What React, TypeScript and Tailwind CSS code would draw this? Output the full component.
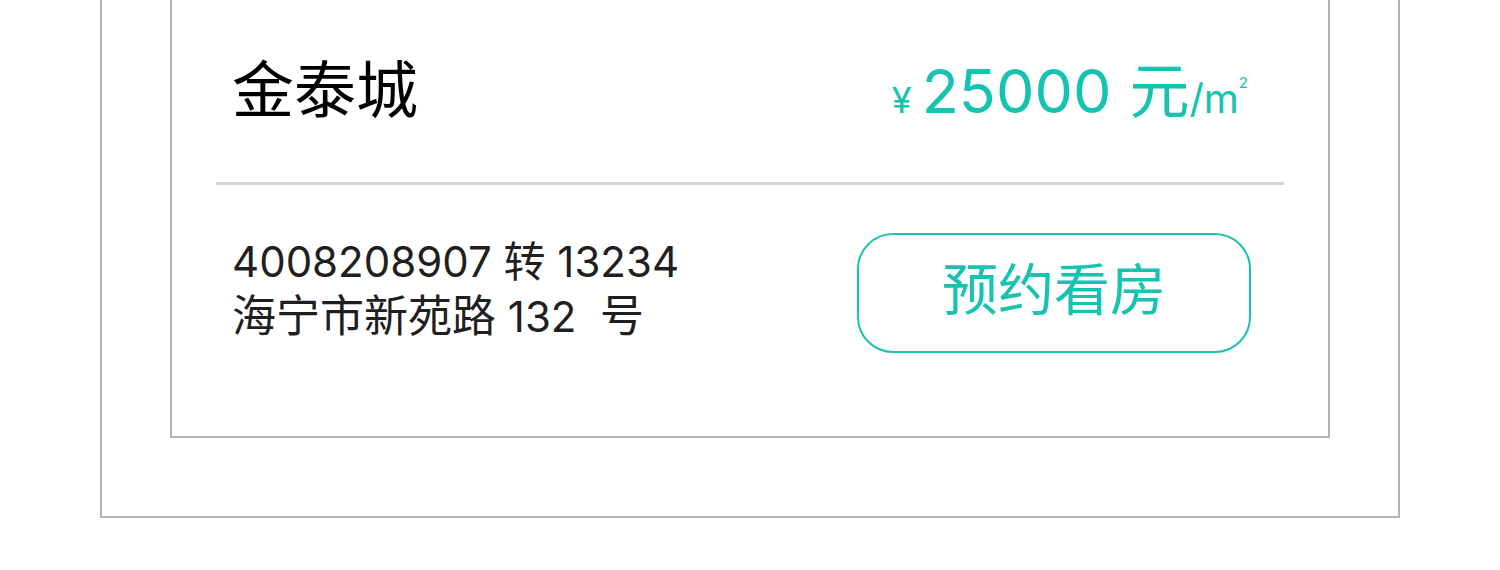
import React from "react";

const font = { fontFamily: 'Inter, "Noto Sans CJK SC", sans-serif' };

const App: React.FC = () => {
  return (
    <div className="w-[1500px] h-[570px] bg-white" style={font}>
      <div className="ml-[100px] w-[1300px] border-2 border-t-0 border-[#b3b3b3] pb-[78px]">
        <div className="mx-[68px] border-2 border-t-0 border-[#b3b3b3] bg-white">
          {/* title + price */}
          <div className="h-[182px] flex items-center justify-between pl-[60px] pr-[80px]">
            <h1 className="text-[62px] leading-none text-black font-normal">金泰城</h1>
            <div className="flex items-baseline text-[#16c2b0] leading-none">
              <span className="text-[36px] mr-[10px]">¥</span>
              <span className="text-[61px]">25000</span>
              <span className="text-[60px] ml-[18px]">元</span>
              <span className="text-[40px]">/m</span>
              <span className="text-[15px] self-start mt-[14px]">2</span>
            </div>
          </div>

          <div className="mx-[44px] h-[3px] bg-[#d4d4d4]" />

          {/* contact + button */}
          <div className="flex items-center justify-between pl-[60px] pr-[77px] pt-[48px] pb-[83px]">
            <div className="text-[42px] leading-[54px] text-[#1f1f1f] -mt-[8px]">
              <p>4008208907 转 13234</p>
              <p>
                <span className="text-[44px]">海宁市新苑路</span> 132&nbsp;&nbsp;<span className="text-[44px]">号</span>
              </p>
            </div>
            <button className="w-[394px] h-[120px] rounded-[36px] border-2 border-[#16c2b0] text-[#16c2b0] text-[56px] leading-none pb-[6px]">
              预约看房
            </button>
          </div>
        </div>
      </div>
    </div>
  );
};

export default App;
